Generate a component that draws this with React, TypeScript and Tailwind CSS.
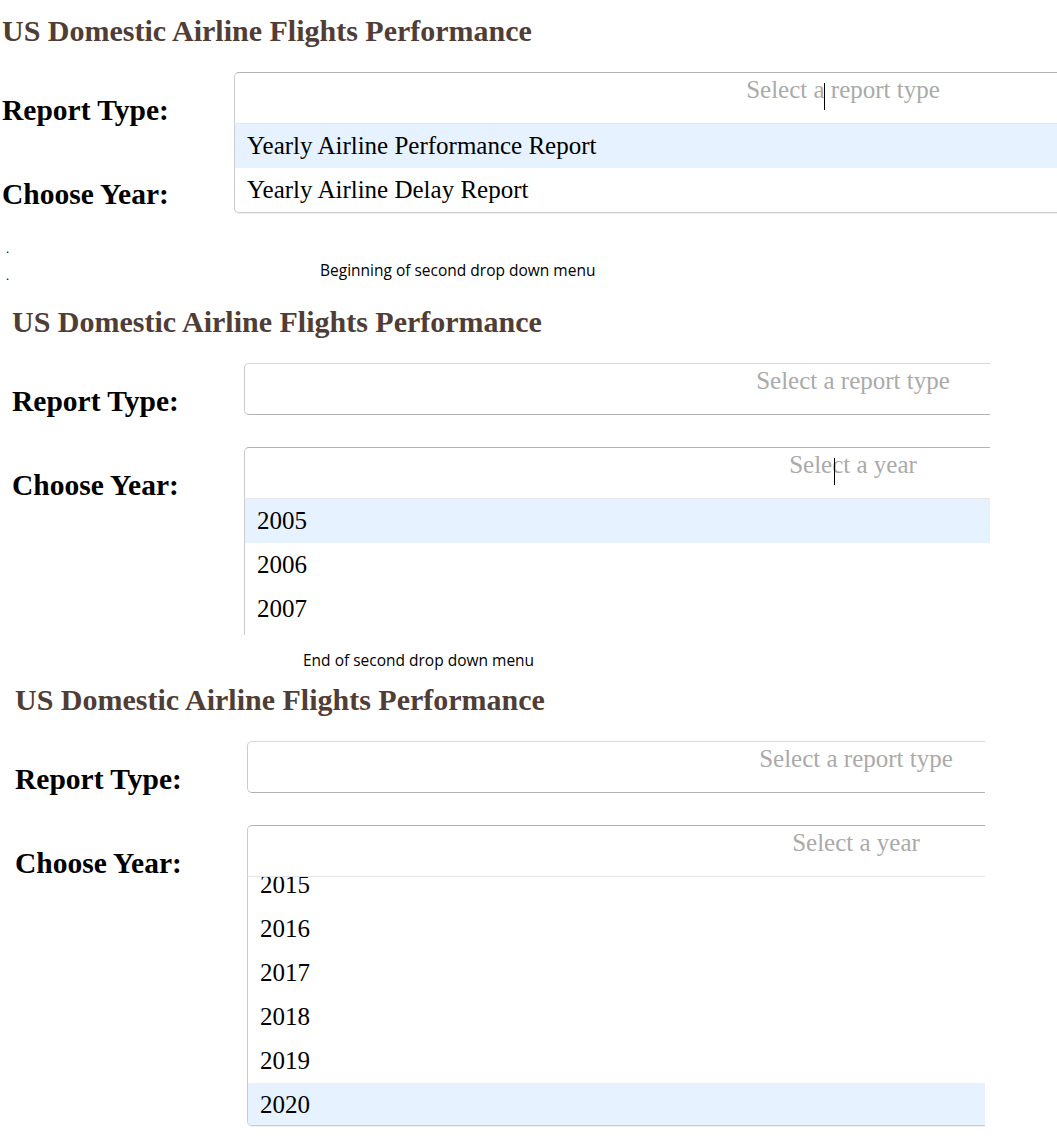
const TITLE = "US Domestic Airline Flights Performance";
const REPORTS = ["Yearly Airline Performance Report", "Yearly Airline Delay Report"];
const YEARS = Array.from({ length: 16 }, (_, i) => String(2005 + i));

/* three stacked captures of the same dash page: report menu open, year menu
   at the top of its list, year menu scrolled to the end */

function Dropdown({
  placeholder,
  options,
  active,
  cursor,
  toEnd,
}: {
  placeholder: string;
  options?: string[];
  active?: number;
  cursor?: boolean;
  toEnd?: boolean;
}) {
  const open = !!options;
  return (
    <div className="relative h-[52px] w-[1218px] shrink-0">
      <div
        className={`relative h-[52px] border bg-white text-center text-[25px] leading-[34px] text-[#aaa] ${
          open
            ? "rounded-t-[5px] border-[#ccc] border-t-[#b3b3b3] border-b-[#e6e6e6]"
            : "rounded-[5px] border-[#ccc] border-t-[#d9d9d9] border-b-[#b3b3b3]"
        }`}
      >
        {placeholder}
        {cursor && <span className="absolute left-[589px] top-[10px] h-[27px] w-px bg-black" />}
      </div>
      {open && (
        <div
          className={`absolute left-0 top-full z-10 flex w-full flex-col overflow-hidden rounded-b-[5px] border border-t-0 border-[#ccc] bg-white shadow-[0_1px_0_rgba(0,0,0,0.06)] ${
            toEnd ? "h-[249px] justify-end" : ""
          }`}
        >
          {options!.map((o, i) => (
            <div
              key={o}
              className={`h-[44px] shrink-0 pl-3 text-left text-[25px] leading-[44px] text-black ${
                i === active ? "bg-[#e6f2ff]" : ""
              } ${toEnd && i === options!.length - 1 ? "-mb-[2px]" : ""}`}
            >
              {o}
            </div>
          ))}
        </div>
      )}
    </div>
  );
}

function Row({ label, first, children }: { label: string; first?: boolean; children: React.ReactNode }) {
  return (
    <div className={`flex h-[52px] items-start ${first ? "mt-[23px]" : "mt-[32px]"}`}>
      <div className="mt-[20px] w-[232px] shrink-0 text-[29.5px] font-bold leading-[36px] text-black">{label}</div>
      {children}
    </div>
  );
}

function Title() {
  return <h1 className="text-[30px] font-bold leading-[36px] text-[#503D36]">{TITLE}</h1>;
}

// only the rows that show inside each capture
const TOP_YEARS = YEARS.slice(0, 4);
const END_YEARS = YEARS.slice(10);

export default function App() {
  return (
    <div className="min-h-[1143px] w-[1057px] overflow-hidden bg-white font-['Liberation_Serif','Times_New_Roman',serif]">
      {/* capture 1: report type menu open */}
      <div className="h-[230px] w-full overflow-hidden pl-[2px] pt-[13px]">
        <Title />
        <Row label="Report Type:" first>
          <Dropdown placeholder="Select a report type" options={REPORTS} active={0} cursor />
        </Row>
        <Row label="Choose Year:">
          <Dropdown placeholder="Select a year" />
        </Row>
      </div>

      <div className="flex h-[74px] pt-[5px] font-['Open_Sans',sans-serif] text-black">
        <div className="w-[320px] shrink-0 pl-[6px] text-[12px]">
          <div className="h-[27px] leading-[27px]">.</div>
          <div className="h-[27px] leading-[27px]">.</div>
        </div>
        <p className="mt-[25px] text-[15.5px] leading-[20px]">Beginning of second drop down menu</p>
      </div>

      {/* capture 2: year menu, top of list */}
      <div className="h-[331px] w-[990px] overflow-hidden pl-[12px]">
        <Title />
        <Row label="Report Type:" first>
          <Dropdown placeholder="Select a report type" />
        </Row>
        <Row label="Choose Year:">
          <Dropdown placeholder="Select a year" options={TOP_YEARS} active={0} cursor />
        </Row>
      </div>

      <div className="h-[47px] pl-[303px] pt-[15px] font-['Open_Sans',sans-serif] text-[15.5px] leading-[20px] text-black">
        End of second drop down menu
      </div>

      {/* capture 3: year menu scrolled to the end */}
      <div className="h-[461px] w-[985px] overflow-hidden pl-[15px]">
        <Title />
        <Row label="Report Type:" first>
          <Dropdown placeholder="Select a report type" />
        </Row>
        <Row label="Choose Year:">
          <Dropdown placeholder="Select a year" options={END_YEARS} active={END_YEARS.length - 1} toEnd />
        </Row>
      </div>
    </div>
  );
}
